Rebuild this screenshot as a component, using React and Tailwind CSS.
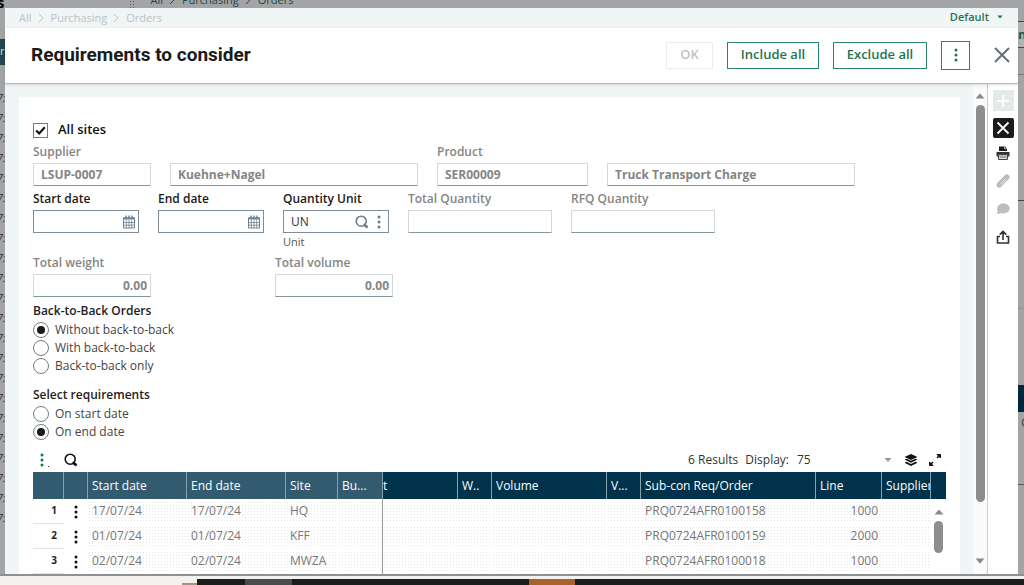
import React from 'react';
import clsx from 'clsx';

const rows = [
  { id: 1, start: '17/07/24', end: '17/07/24', site: 'HQ', order: 'PRQ0724AFR0100158', line: '1000' },
  { id: 2, start: '01/07/24', end: '01/07/24', site: 'KFF', order: 'PRQ0724AFR0100159', line: '2000' },
  { id: 3, start: '02/07/24', end: '02/07/24', site: 'MWZA', order: 'PRQ0724AFR0100018', line: '1000' },
];

const columns = [
  { key: 'num', label: '', width: 'w-[31px]', pinned: true },
  { key: 'menu', label: '', width: 'w-6', pinned: true },
  { key: 'start', label: 'Start date', width: 'w-[99px]', pinned: true },
  { key: 'end', label: 'End date', width: 'w-[99px]', pinned: true },
  { key: 'site', label: 'Site', width: 'w-[52px]', pinned: true },
  { key: 'bu', label: 'Bu...', width: 'w-[45px]', pinned: true },
  { key: 'weight', label: 't', width: 'w-[75px]' },
  { key: 'wu', label: 'W..', width: 'w-[34px]' },
  { key: 'volume', label: 'Volume', width: 'w-[115px]' },
  { key: 'vu', label: 'V...', width: 'w-[34px]' },
  { key: 'order', label: 'Sub-con Req/Order', width: '' },
  { key: 'line', label: 'Line', width: 'w-[66px]' },
  { key: 'supplier', label: 'Supplier', width: 'w-[49px]' },
];

const Dots = ({ className }) => (
  <svg viewBox="0 0 4 14" className={clsx('w-1 h-3.5 fill-current', className)} aria-hidden="true">
    <circle cx="2" cy="2" r="1.5" />
    <circle cx="2" cy="7" r="1.5" />
    <circle cx="2" cy="12" r="1.5" />
  </svg>
);

const SearchIcon = () => (
  <svg viewBox="0 0 14 14" className="w-3.5 h-3.5" fill="none" stroke="currentColor" aria-hidden="true">
    <circle cx="6.2" cy="6.2" r="5" strokeWidth="1.6" />
    <path d="M8.6 9.4l4 3" strokeWidth="2.6" />
  </svg>
);

const CalendarIcon = () => (
  <svg viewBox="0 0 12 14" className="w-3 h-3.5" fill="none" stroke="#6f8190" aria-hidden="true">
    <path d="M0.5 3h11v10h-11z" />
    <path d="M0 3.5h12" strokeWidth="2" />
    <path d="M3 0.5v3M6 0.5v3M9 0.5v3" strokeWidth="1.4" />
    <path d="M3.3 5v8M6 5v8M8.7 5v8M1 7.5h10M1 10.2h10" strokeWidth="0.8" />
  </svg>
);

const Triangle = ({ up, size = 'w-2.5 h-1.5', className }) => (
  <svg viewBox="0 0 10 6" className={clsx('fill-current', size, className)} aria-hidden="true">
    <path d={up ? 'M0.5 5.5h9L5 0.5z' : 'M0.5 0.5h9L5 5.5z'} />
  </svg>
);

const Field = ({ id, label, ariaLabel, value = '', width, muted, right, hint, children }) => (
  <div className={width}>
    <label htmlFor={id} className={clsx('block h-4 text-xs leading-4 font-semibold whitespace-nowrap', muted ? 'text-[#858585]' : 'text-[#1a1a1a]')}>
      {label}
    </label>
    <div
      className={clsx(
        'mt-[3px] h-[23px] flex items-center gap-2 border bg-white',
        muted ? 'border-[#d3d8da] border-b-[#8797a0]' : 'border-[#7d8c96]',
      )}
    >
      <input
        id={id}
        type="text"
        defaultValue={value}
        readOnly={muted}
        aria-label={ariaLabel}
        className={clsx(
          'flex-1 min-w-0 h-full bg-transparent outline-none text-xs',
          muted ? 'font-bold text-[#858585]' : 'text-[#333]',
          right ? 'text-right pr-[3px]' : 'pl-[7px]',
        )}
      />
      {children}
    </div>
    {hint && <p className="mt-[3px] h-3 text-[11px] leading-3 text-[#555]">{hint}</p>}
  </div>
);

const DateField = ({ id, label }) => (
  <Field id={id} label={label} width="w-[106px]">
    <button type="button" aria-label={`Pick ${label}`} className="mr-[3px]">
      <CalendarIcon />
    </button>
  </Field>
);

const RadioGroup = ({ name, title, options, selected }) => (
  <fieldset>
    <legend className="h-4 text-xs leading-4 font-semibold text-[#222]">{title}</legend>
    <div className="mt-0.5">
      {options.map((option) => (
        <label key={option} className="flex items-center h-[18px] gap-1.5 text-xs text-[#444]">
          <input
            type="radio"
            name={name}
            defaultChecked={option === selected}
            className="appearance-none w-4 h-4 rounded-full border border-[#6f7c84] bg-white flex items-center justify-center checked:before:block checked:before:w-2 checked:before:h-2 checked:before:rounded-full checked:before:bg-[#1a1a1a]"
          />
          {option}
        </label>
      ))}
    </div>
  </fieldset>
);

const Crumbs = ({ className }) => (
  <nav className={clsx('flex items-center text-[11px] whitespace-nowrap', className)}>
    {['All', 'Purchasing', 'Orders'].map((crumb, idx) => (
      <React.Fragment key={crumb}>
        {idx > 0 && (
          <svg viewBox="0 0 6 10" className="w-1.5 h-2.5 ml-1.5 mr-[7px]" fill="none" stroke="currentColor" aria-hidden="true">
            <path d="M1 1l4 4-4 4" />
          </svg>
        )}
        <a href="#">{crumb}</a>
      </React.Fragment>
    ))}
  </nav>
);

const ResultsTable = () => (
  <table className="flex-1 min-w-0 w-full table-fixed border-separate border-spacing-0 text-xs">
    <thead>
      <tr className="h-[27px] text-left text-white">
        {columns.map((col) => (
          <th
            key={col.key}
            className={clsx(
              'p-0 font-normal overflow-hidden whitespace-nowrap border-r border-[#86a3ad]',
              col.width,
              col.pinned ? 'bg-[#335b6f]' : 'bg-[#00324c]',
              col.key !== 'weight' && 'pl-1',
            )}
          >
            {col.label}
          </th>
        ))}
      </tr>
    </thead>
    <tbody>
      {rows.map((row) => (
        <tr key={row.id} className="h-[25px] text-[#777]">
          <td className="p-0 pr-[7px] text-right text-[10px] font-bold text-[#222] border-b border-[#e4e7e8]">{row.id}</td>
          <td className="p-0">
            <button type="button" aria-label={`Actions for row ${row.id}`} className="flex mx-auto">
              <Dots className="text-[#111]" />
            </button>
          </td>
          {columns.slice(2).map((col) => (
            <td key={col.key} className={clsx('p-0 whitespace-nowrap', col.key === 'bu' && 'border-r border-[#999]')}>
              <div
                className={clsx(
                  'h-[21px] leading-5 pl-1 bg-[radial-gradient(#e6e6e6_1px,transparent_1px)] bg-[size:3px_3px]',
                  col.key === 'line' && 'text-right pr-1',
                )}
              >
                {row[col.key]}
              </div>
            </td>
          ))}
        </tr>
      ))}
    </tbody>
  </table>
);

const ToolRail = () => (
  <aside className="w-[31px] shrink-0 bg-white border-l border-[#c9cccd] flex flex-col items-center pt-1.5">
    <button type="button" aria-label="New" className="w-[21px] h-[21px] bg-[#e4e9ea] flex items-center justify-center">
      <svg viewBox="0 0 14 14" className="w-3.5 h-3.5" stroke="#fff" strokeWidth="2"><path d="M7 1v12M1 7h12" /></svg>
    </button>
    <button type="button" aria-label="Close page" className="mt-[7px] w-[21px] h-5 rounded-xs bg-[#1b1b1b] flex items-center justify-center">
      <svg viewBox="0 0 14 14" className="w-3.5 h-3.5" stroke="#fff" strokeWidth="1.8"><path d="M1.5 1.5l11 11M12.5 1.5l-11 11" /></svg>
    </button>
    <button type="button" aria-label="Print" className="mt-2">
      <svg viewBox="0 0 14 14" className="w-3.5 h-3.5" aria-hidden="true">
        <path d="M3 0.5h6l2 2V5H3z" fill="#1b1b1b" />
        <path d="M8.6 0.5v2.2H11" stroke="#fff" strokeWidth="0.7" fill="none" />
        <path d="M0.5 6h13v4.5h-13z" fill="#333" />
        <path d="M2.5 8.7h9v4.8h-9z" fill="#ddd" stroke="#444" />
        <path d="M3.5 11h7" stroke="#666" />
      </svg>
    </button>
    <button type="button" aria-label="Attachments" className="mt-3.5">
      <svg viewBox="0 0 14 14" className="w-3.5 h-3.5" fill="none" stroke="#b9b9b9" strokeLinecap="round">
        <path d="M3.2 10.8l7.6-7.6" strokeWidth="5.4" />
        <path d="M3.8 10.2l5.8-5.8M5.4 10.8l5-5" stroke="#ededed" strokeWidth="0.7" />
      </svg>
    </button>
    <button type="button" aria-label="Comments" className="mt-3.5">
      <svg viewBox="0 0 14 14" className="w-3.5 h-3.5" fill="#bdbdbd">
        <ellipse cx="7.4" cy="6.5" rx="6.3" ry="4.9" />
        <path d="M2 8.5L0.8 12.2 6 10.8z" />
      </svg>
    </button>
    <button type="button" aria-label="Share" className="mt-3.5">
      <svg viewBox="0 0 14 14" className="w-3.5 h-3.5" fill="none" stroke="#333" strokeWidth="1.6">
        <path d="M4 6.5H1.5v6.5h11V6.5H10M7 10V1.5M3.8 4.6L7 1.4l3.2 3.2" />
      </svg>
    </button>
  </aside>
);

// Page scroll bar at the right edge of the form
const ScrollRail = () => (
  <div className="w-[14px] shrink-0 bg-[#fafafa] flex flex-col items-center pt-[9px] pb-2.5 text-[#8a8a8a]">
    <Triangle up />
    <div className="mt-1.5 w-[9px] h-[397px] rounded-full bg-[#8d8d8d]" />
    <Triangle className="mt-auto" />
  </div>
);

const RequirementsForm = () => (
  <main className="ml-3.5 mr-[13px] mt-[13px] flex-1 min-w-0 bg-white px-3.5 pt-6 overflow-hidden">
    <label className="flex items-center h-[18px] gap-[10px] text-[13px] font-semibold text-[#111]">
      <span className="relative flex">
        <input type="checkbox" defaultChecked className="appearance-none w-[15px] h-[15px] border border-[#6f7c84] bg-white" />
        <svg viewBox="0 0 15 15" className="absolute inset-0 pointer-events-none" fill="none" stroke="#111" strokeWidth="2.2" aria-hidden="true">
          <path d="M3.2 7.5l3 3 5.6-6.2" />
        </svg>
      </span>
      All sites
    </label>

    <div className="mt-[5px] flex gap-[19px]">
      <Field id="supplier" label="Supplier" value="LSUP-0007" width="w-[118px]" muted />
      <Field id="supplier-name" ariaLabel="Supplier name" value="Kuehne+Nagel" width="w-[248px]" muted />
      <Field id="product" label="Product" value="SER00009" width="w-[151px]" muted />
      <Field id="product-name" ariaLabel="Product name" value="Truck Transport Charge" width="w-[248px]" muted />
    </div>

    <div className="mt-[5px] flex gap-[19px]">
      <DateField id="start-date" label="Start date" />
      <DateField id="end-date" label="End date" />
      <Field id="unit" label="Quantity Unit" value="UN" width="w-[106px]" hint="Unit">
        <button type="button" aria-label="Search unit" className="text-[#6f7c88]">
          <SearchIcon />
        </button>
        <button type="button" aria-label="Unit actions" className="mr-[7px]">
          <Dots className="text-[#6f7c88]" />
        </button>
      </Field>
      <Field id="total-qty" label="Total Quantity" width="w-36" muted />
      <Field id="rfq-qty" label="RFQ Quantity" width="w-36" muted />
    </div>

    <div className="mt-[7px] flex gap-[124px]">
      <Field id="total-weight" label="Total weight" value="0.00" width="w-[118px]" muted right />
      <Field id="total-volume" label="Total volume" value="0.00" width="w-[118px]" muted right />
    </div>

    <div className="mt-1.5 flex flex-col gap-3">
      <RadioGroup
        name="b2b"
        title="Back-to-Back Orders"
        options={['Without back-to-back', 'With back-to-back', 'Back-to-back only']}
        selected="Without back-to-back"
      />
      <RadioGroup name="select" title="Select requirements" options={['On start date', 'On end date']} selected="On end date" />
    </div>

    {/* Table toolbar */}
    <div className="mt-2 h-[22px] flex items-center text-xs text-[#333]">
      <button type="button" aria-label="Table actions" className="ml-[7px] flex items-end gap-1 text-[#00813a]">
        <Dots />
        <span className="w-px h-px bg-[#333]" />
      </button>
      <button type="button" aria-label="Search table" className="ml-[15px] text-[#111]">
        <SearchIcon />
      </button>
      <span className="ml-auto">6 Results</span>
      <label htmlFor="display" className="ml-[7px]">Display:</label>
      <span className="ml-2 w-[95px] flex items-center">
        <select id="display" defaultValue="75" className="appearance-none flex-1 bg-transparent outline-none">
          <option>75</option>
        </select>
        <Triangle size="w-2 h-1.5" className="text-[#999]" />
      </span>
      <button type="button" aria-label="Layers" className="ml-3">
        <svg viewBox="0 0 14 14" className="w-3.5 h-3.5" fill="#111">
          <path d="M7 1l6.5 3L7 7 0.5 4z" />
          <path d="M0.5 6.6L2.6 5.7 7 7.8l4.4-2.1 2.1 0.9L7 9.8z" />
          <path d="M0.5 9.8l2.1-1L7 10.9l4.4-2.1 2.1 1L7 13z" />
        </svg>
      </button>
      <button type="button" aria-label="Full screen" className="mr-1 ml-2.5">
        <svg viewBox="0 0 14 14" className="w-3.5 h-3.5" fill="#111" stroke="#111">
          <path d="M9 1.5h3.5V5zM1.5 9v3.5H5z" />
          <path d="M11.5 2.5L9 5M2.5 11.5L5 9" strokeWidth="1.5" />
        </svg>
      </button>
    </div>

    <div className="mt-px flex items-start">
      <ResultsTable />
      <div className="w-[15px] shrink-0">
        <div className="h-[27px] bg-[#00324c]" />
        <div className="flex flex-col items-center pt-2.5 text-[#8a8a8a]">
          <Triangle up />
          <div className="mt-1.5 w-[9px] h-8 rounded-full bg-[#8d8d8d]" />
        </div>
      </div>
    </div>
  </main>
);

const App = () => (
  <div className="h-screen flex flex-col overflow-hidden bg-[#a3a4a6] font-['Open_Sans','Noto_Sans',sans-serif]">
    {/* Dimmed page behind the dialog */}
    <div className="h-2 shrink-0 flex items-end overflow-hidden text-[#1f4a40]">
      <span className="text-[15px] leading-3 font-bold text-black -ml-[3px]">s</span>
      <span className="ml-[125px] w-[5px] h-full bg-[radial-gradient(#555_1px,transparent_1px)] bg-[size:3px_3px]" />
      <Crumbs className="ml-4 h-4" />
    </div>

    <div className="flex-1 min-h-0 flex">
      <div className="w-[5px] shrink-0 overflow-hidden text-[11px] text-[#333] pt-[31px]">
        <div className="h-[26px] bg-[#234650] text-[#cdd] leading-6">r</div>
        <div className="mt-[23px] italic">
          {Array.from({ length: 22 }, (_, idx) => (
            <div key={idx} className="h-5 leading-5 -ml-[3px]">7:</div>
          ))}
        </div>
      </div>

      <section className="flex-1 min-w-0 flex flex-col bg-[#f0f5f5]" role="dialog" aria-label="Requirements to consider">
        <div className="h-5 shrink-0 flex items-center justify-between pl-3.5 pr-[15px]">
          <Crumbs className="text-[#bdc3c5]" />
          <button type="button" className="flex items-center gap-2 pb-0.5 text-[11px] font-semibold text-[#1f7455]">
            Default
            <Triangle size="w-1.5 h-1" />
          </button>
        </div>

        <header className="relative h-14 shrink-0 flex items-center bg-white pl-[26px] pr-2 pb-px border-b border-[#b5b9ba] shadow-sm">
          <h1 className="mr-auto text-[19px] font-bold text-[#1a1a1a] font-['Roboto',sans-serif]">Requirements to consider</h1>
          <button type="button" disabled className="w-[47px] h-[27px] border border-[#e9ecec] text-[13px] font-semibold text-[#c0c4c6]">OK</button>
          <button type="button" className="ml-3.5 w-[92px] h-[27px] border border-[#2c8566] text-[13px] font-semibold text-[#1f7455]">Include all</button>
          <button type="button" className="ml-3.5 w-[94px] h-[27px] border border-[#2c8566] text-[13px] font-semibold text-[#1f7455]">Exclude all</button>
          <button type="button" aria-label="More actions" className="ml-3.5 w-[29px] h-[29px] border border-[#2c8566] flex items-center justify-center text-[#1f7455]">
            <Dots />
          </button>
          <button type="button" aria-label="Close" className="ml-6">
            <svg viewBox="0 0 16 16" className="w-4 h-4" stroke="#607078" strokeWidth="2"><path d="M1 1l14 14M15 1L1 15" /></svg>
          </button>
        </header>

        <div className="flex-1 min-h-0 flex">
          <RequirementsForm />
          <ScrollRail />
          <ToolRail />
        </div>
      </section>

      <div className="w-1.5 shrink-0 overflow-hidden text-[13px] pt-[13px]">
        <div className="h-[27px] border-y border-[#1f5a50] bg-[#b0b2b3] font-bold leading-6 text-[#1f5a50]">m</div>
        <div className="h-[27px] border-b border-[#77797a]" />
        <div className="h-[126px] border-b border-[#444]" />
        <div className="h-[108px] border-b border-[#8b8d8e]" />
        <div className="h-[76px]" />
        <div className="h-[27px] bg-[#00283c]" />
        <div className="h-[73px] pl-[3px] leading-5 text-[#444] border-b border-[#555]">C</div>
      </div>
    </div>

    {/* Task bar edge */}
    <div className="h-[5px] shrink-0 bg-[#f3f2f1] border-t-2 border-[#8f9092]" />
    <div className="h-[6px] shrink-0 flex bg-[#1c1c1c]">
      <div className="w-[197px] bg-[#f3f1f0] flex justify-end">
        <div className="w-[15px] mt-1 bg-[#a39580]" />
      </div>
      <div className="ml-12 w-[47px] bg-[#4a4a4a]" />
      <div className="ml-[237px] w-[46px] bg-[#a9622c]" />
    </div>
  </div>
);

export default App;
